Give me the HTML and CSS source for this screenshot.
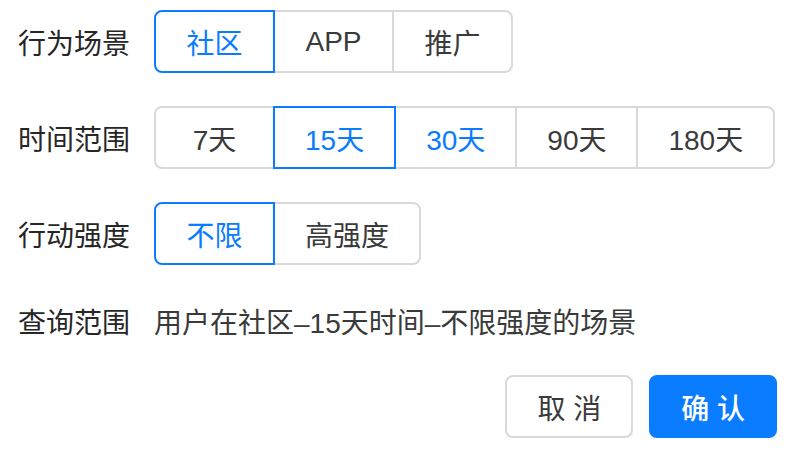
FILE: index.html
```html
<!DOCTYPE html>
<html lang="zh-CN">
<head>
<meta charset="utf-8">
<title>行为场景</title>
<link rel="stylesheet" href="styles.css">
</head>
<body>
<div class="panel">
  <div class="row">
    <div class="label">行为场景</div>
    <div class="seg">
      <span class="opt on">社区</span>
      <span class="opt">APP</span>
      <span class="opt">推广</span>
    </div>
  </div>
  <div class="row">
    <div class="label">时间范围</div>
    <div class="seg">
      <span class="opt">7天</span>
      <span class="opt on">15天</span>
      <span class="opt hint">30天</span>
      <span class="opt">90天</span>
      <span class="opt">180天</span>
    </div>
  </div>
  <div class="row">
    <div class="label">行动强度</div>
    <div class="seg">
      <span class="opt on">不限</span>
      <span class="opt">高强度</span>
    </div>
  </div>
  <div class="row query">
    <div class="label">查询范围</div>
    <div class="summary">用户在社区–15天时间–不限强度的场景</div>
  </div>
  <div class="footer">
    <button class="btn">取 消</button>
    <button class="btn primary">确 认</button>
  </div>
</div>
</body>
</html>
```
FILE: styles.css
```css
html, body {
  margin: 0;
  padding: 0;
  background: #ffffff;
}
body {
  font-family: "Liberation Sans", "Noto Sans CJK SC", sans-serif;
  font-size: 28px;
  color: #333333;
}
.panel {
  padding: 10px 16px 0 18px;
}
.row {
  display: flex;
  align-items: center;
  margin-bottom: 33px;
}
.label {
  width: 112px;
  margin-right: 24px;
  color: #262626;
  flex: none;
}
.seg {
  display: flex;
}
.opt {
  position: relative;
  box-sizing: border-box;
  height: 63px;
  min-width: 121px;
  padding: 0 30px;
  display: flex;
  align-items: center;
  justify-content: center;
  border: 2px solid #d9d9d9;
  margin-left: -2px;
  color: #3a3a3a;
  background: #fff;
}
.opt:first-child {
  margin-left: 0;
  border-radius: 8px 0 0 8px;
}
.opt:last-child {
  border-radius: 0 8px 8px 0;
}
.opt.on {
  border-color: #0a7cff;
  color: #0a7cff;
  z-index: 1;
}
.opt.hint {
  color: #0a7cff;
}
.query {
  height: 46px;
  margin-bottom: 31px;
}
.summary {
  color: #3a3a3a;
}
.footer {
  display: flex;
  justify-content: flex-end;
  gap: 16px;
}
.btn {
  box-sizing: border-box;
  height: 63px;
  padding: 0 30px;
  font-family: inherit;
  font-size: 28px;
  color: #3a3a3a;
  background: #fff;
  border: 2px solid #d9d9d9;
  border-radius: 8px;
  box-shadow: 0 4px 0 rgba(0, 0, 0, 0.03);
}
.btn.primary {
  background: #0a7cff;
  border-color: #0a7cff;
  color: #ffffff;
  font-weight: 500;
}
```
